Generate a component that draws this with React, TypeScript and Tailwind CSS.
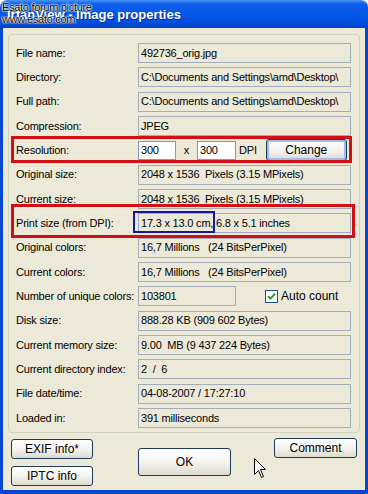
import React from 'react';

const ui = "font-['Liberation_Sans',Arial,sans-serif] text-[11px] tracking-[-0.2px] text-black";

const Field: React.FC<{ children?: React.ReactNode; w?: string }> = ({ children, w = 'w-[213px]' }) => (
  <div className={`${w} h-[20px] shrink-0 border border-[#a3adb9] pl-[2px] flex items-center whitespace-nowrap overflow-hidden`}>
    {children}
  </div>
);

const Row: React.FC<{ label: string; children: React.ReactNode }> = ({ label, children }) => (
  <div className="flex items-center h-[20px]">
    <div className="w-[122px] shrink-0 whitespace-nowrap">{label}</div>
    {children}
  </div>
);

const XpButton: React.FC<{ label: string; className?: string; isDefault?: boolean }> = ({ label, className = '', isDefault }) => (
  <div
    className={`${className} rounded-[3px] border border-[#1e3a5c] bg-linear-to-b from-[#ffffff] via-[#f4f3ee] to-[#dedbcf] flex items-center justify-center text-[12px] tracking-normal ${
      isDefault ? 'shadow-[inset_0_0_0_2px_#9ebcf0]' : ''
    }`}
  >
    {label}
  </div>
);

export default function App() {
  return (
    <div className={`relative w-[368px] h-[494px] overflow-hidden bg-white ${ui}`}>
      {/* title bar */}
      <div className="relative h-[28px] rounded-t-[7px] bg-[linear-gradient(to_bottom,#4a93f7_0%,#0d5ee9_14%,#0357e6_55%,#014cdc_85%,#0740c4_100%)] flex items-center">
        <span className="ml-[7px] mt-[2px] font-bold text-[13px] tracking-normal text-white [text-shadow:1px_1px_0_#0a2a8a]">
          IrfanView - Image properties
        </span>
        <div className="absolute left-[2px] top-[1px] text-[11px] leading-[12px] tracking-[-0.3px] text-black [text-shadow:0_0_1px_#fff,0_0_1px_#fff,0_0_2px_#fff,0_0_2px_#fff]">
          <div>Esato forum picture</div>
          <div>www.esato.com</div>
        </div>
      </div>

      {/* window body */}
      <div className="h-[466px] bg-[#ece9d8] border-x-[3px] border-b-[4px] border-[#0846d6] flex flex-col">
        <div className="ml-[5px] mt-[6px] w-[352px] h-[399px] border border-[#d0d0bf] rounded-[4px] pl-[7px] pt-[8px] flex flex-col gap-[4.33px]">
          <Row label="File name:"><Field>492736_orig.jpg</Field></Row>
          <Row label="Directory:"><Field>C:\Documents and Settings\amd\Desktop\</Field></Row>
          <Row label="Full path:"><Field>C:\Documents and Settings\amd\Desktop\</Field></Row>
          <Row label="Compression:"><Field>JPEG</Field></Row>
          <Row label="Resolution:">
            <div className="flex items-center">
              <div className="w-[38px] h-[19px] bg-white border border-[#7f9db9] pl-[2px] flex items-center">300</div>
              <span className="w-[21px] text-center">x</span>
              <div className="w-[39px] h-[19px] bg-white border border-[#7f9db9] pl-[2px] flex items-center">300</div>
              <span className="ml-[3px]">DPI</span>
              <XpButton label="Change" isDefault className="ml-[9px] w-[81px] h-[22px]" />
            </div>
          </Row>
          <Row label="Original size:"><Field>2048 x 1536&nbsp; Pixels (3.15 MPixels)</Field></Row>
          <Row label="Current size:"><Field>2048 x 1536&nbsp; Pixels (3.15 MPixels)</Field></Row>
          <Row label="Print size (from DPI):"><Field>17.3 x 13.0 cm, 6.8 x 5.1 inches</Field></Row>
          <Row label="Original colors:"><Field>16,7 Millions&nbsp;&nbsp; (24 BitsPerPixel)</Field></Row>
          <Row label="Current colors:"><Field>16,7 Millions&nbsp;&nbsp; (24 BitsPerPixel)</Field></Row>
          <Row label="Number of unique colors:">
            <Field w="w-[98px]">103801</Field>
            <div className="ml-[29px] w-[13px] h-[13px] bg-white border border-[#1c5180] flex items-center justify-center">
              <svg width="9" height="9" viewBox="0 0 9 9">
                <path d="M1 4.2 L3.4 6.6 L8 1.8" fill="none" stroke="#21a121" strokeWidth="2" />
              </svg>
            </div>
            <span className="ml-[3px] text-[12px] tracking-normal">Auto count</span>
          </Row>
          <Row label="Disk size:"><Field>888.28 KB (909 602 Bytes)</Field></Row>
          <Row label="Current memory size:"><Field>9.00&nbsp; MB (9 437 224 Bytes)</Field></Row>
          <Row label="Current directory index:"><Field>2&nbsp; /&nbsp; 6</Field></Row>
          <Row label="File date/time:"><Field>04-08-2007 / 17:27:10</Field></Row>
          <Row label="Loaded in:"><Field>391 milliseconds</Field></Row>
        </div>

        <div className="flex items-start mt-[5px] ml-[8px]">
          <div className="flex flex-col gap-[7px] mt-[1px]">
            <XpButton label="EXIF info*" className="w-[82px] h-[20px]" />
            <XpButton label="IPTC info" className="w-[82px] h-[20px]" />
          </div>
          <XpButton label="OK" className="ml-[45px] mt-[10px] w-[93px] h-[28px]" />
          <XpButton label="Comment" className="ml-[43px] w-[83px] h-[20px]" />
        </div>
      </div>

      {/* annotations */}
      <div className="absolute left-[11px] top-[136px] w-[341px] h-[27px] border-[3px] border-[#d40f14]" />
      <div className="absolute left-[11px] top-[204px] w-[344px] h-[34px] border-[3px] border-[#d40f14]" />
      <div className="absolute left-[133px] top-[211px] w-[82px] h-[22px] border-2 border-[#1717a6]" />

      {/* mouse pointer */}
      <svg className="absolute left-[254px] top-[458px]" width="13" height="21" viewBox="0 0 13 21">
        <path d="M0.5 0.5 L0.5 16.5 L4.5 12.5 L7.5 19.5 L9.5 18.5 L6.5 11.5 L11.5 11.5 Z" fill="#fff" stroke="#000" strokeWidth="1" />
      </svg>
    </div>
  );
}
